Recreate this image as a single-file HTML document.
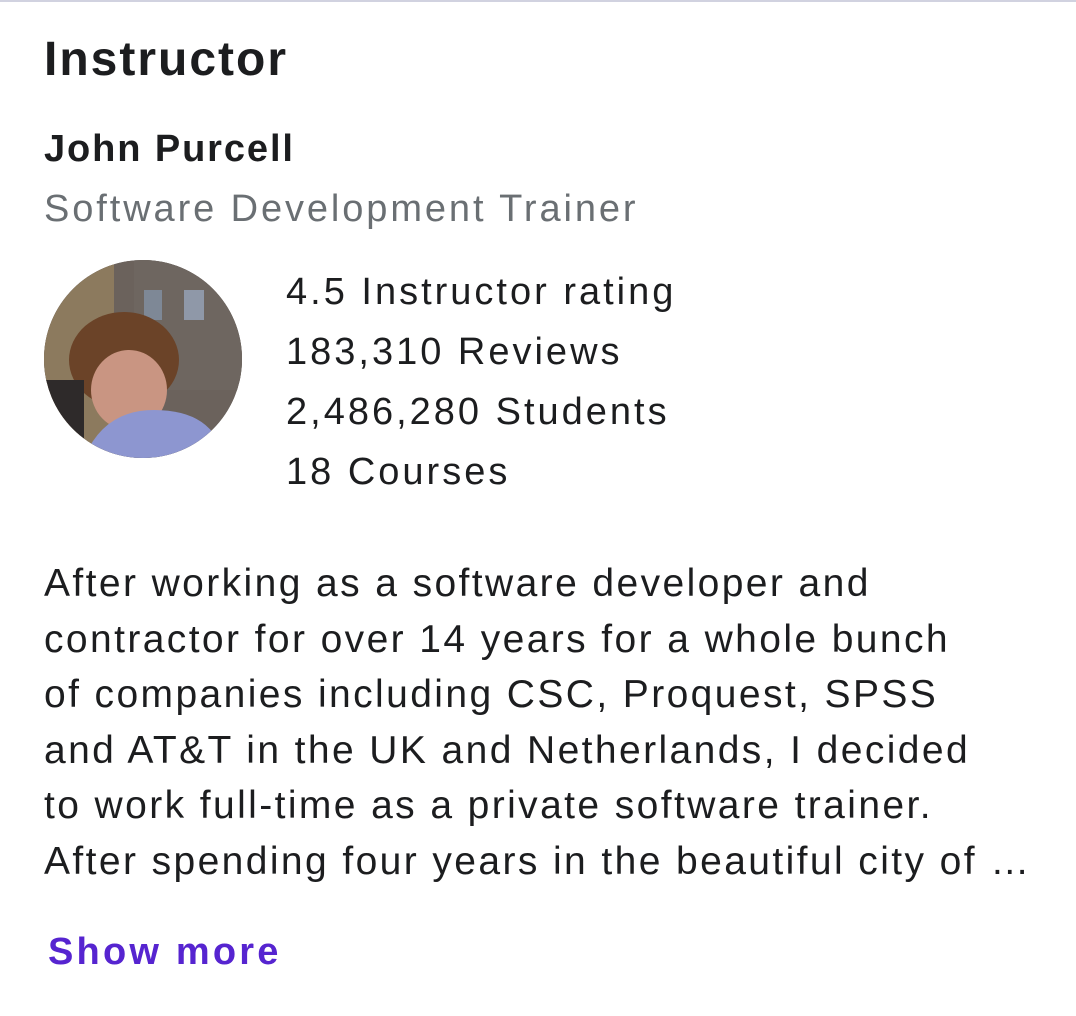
<!DOCTYPE html>
<html><head><meta charset="utf-8"><style>
html,body{margin:0;padding:0;background:#fff;width:1076px;height:1016px;overflow:hidden}
body{font-family:"Liberation Sans",Arial,sans-serif;color:#1c1d1f;position:relative}
.t{position:absolute;white-space:nowrap}
.line{position:absolute;left:0;top:0;width:1076px;height:2px;background:#d1d2e0}
</style></head><body>
<div class="line"></div>
<div class="t" style="left:44px;top:32px;font-size:48px;font-weight:bold;letter-spacing:2px">Instructor</div>
<div class="t" style="left:44px;top:128px;font-size:38px;font-weight:bold;letter-spacing:1.9px">John Purcell</div>
<div class="t" style="left:44px;top:188px;font-size:38px;color:#6a6f73;letter-spacing:2.9px">Software Development Trainer</div>
<div style="position:absolute;left:44px;top:260px;width:198px;height:198px;border-radius:50%;overflow:hidden;background:#5a5450">
<svg width="198" height="198" viewBox="0 0 198 198">
<rect width="198" height="198" fill="#6b625c"/>
<rect x="0" y="0" width="70" height="198" fill="#8c7a5e"/>
<rect x="90" y="0" width="108" height="130" fill="#6e6660"/>
<rect x="140" y="30" width="20" height="30" fill="#8f98a8"/>
<rect x="100" y="30" width="18" height="30" fill="#7e8896"/>
<ellipse cx="80" cy="100" rx="55" ry="48" fill="#6b4328"/>
<ellipse cx="85" cy="130" rx="38" ry="40" fill="#c99582"/>
<path d="M40 198 Q60 150 110 150 Q170 150 180 198Z" fill="#8d96d0"/>
<rect x="0" y="120" width="40" height="78" fill="#2e2a2a"/>
</svg></div>
<div class="t" style="left:286px;top:271px;font-size:38px;letter-spacing:3px">4.5 Instructor rating</div>
<div class="t" style="left:286px;top:331px;font-size:38px;letter-spacing:3px">183,310 Reviews</div>
<div class="t" style="left:286px;top:391px;font-size:38px;letter-spacing:3px">2,486,280 Students</div>
<div class="t" style="left:286px;top:451px;font-size:38px;letter-spacing:3px">18 Courses</div>
<div style="position:absolute;left:44px;top:556px;font-size:39px;letter-spacing:2.4px;line-height:55.6px;white-space:nowrap">
After working as a software developer and<br>
contractor for over 14 years for a whole bunch<br>
of companies including CSC, Proquest, SPSS<br>
and AT&amp;T in the UK and Netherlands, I decided<br>
to work full-time as a private software trainer.<br>
After spending four years in the beautiful city of …</div>
<div class="t" style="left:48px;top:931px;font-size:38px;font-weight:bold;color:#5624d0;letter-spacing:3.2px">Show more</div>
</body></html>
